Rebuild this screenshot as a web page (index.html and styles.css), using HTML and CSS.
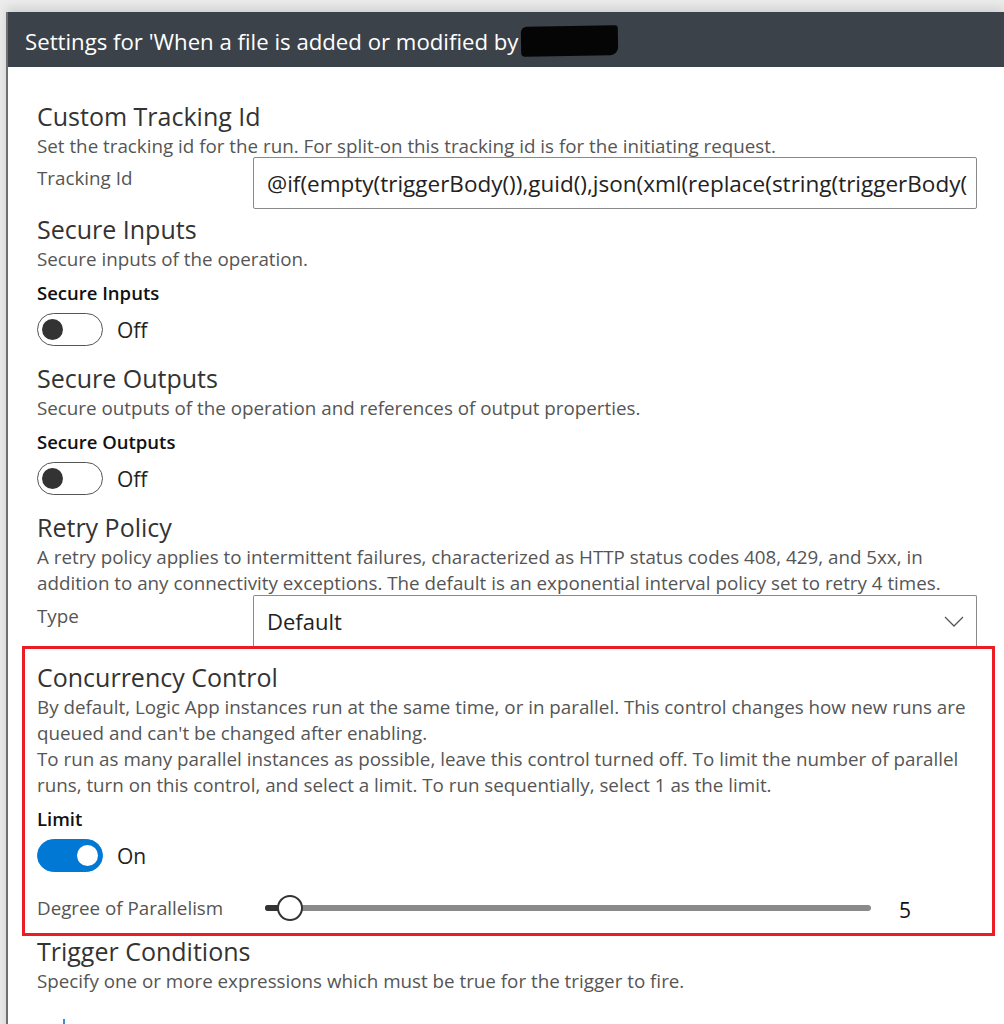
FILE: index.html
```html
<!DOCTYPE html>
<html lang="en">
<head>
  <meta charset="UTF-8" />
  <meta name="viewport" content="width=device-width, initial-scale=1.0" />
  <title>Trigger Settings</title>
  <link rel="stylesheet" href="styles.css">
</head>
<body>
  <div class="panel">
    <div class="panel-header">
      <span class="title">Settings for 'When a file is added or modified by</span><span class="redact"></span>
    </div>

    <div class="panel-body">
      <section class="setting">
        <h3>Custom Tracking Id</h3>
        <p class="desc">Set the tracking id for the run. For split-on this tracking id is for the initiating request.</p>
        <div class="field">
          <label class="field-label">Tracking Id</label>
          <div class="textbox"><span class="textbox-value">@if(empty(triggerBody()),guid(),json(xml(replace(string(triggerBody(</span></div>
        </div>
      </section>

      <section class="setting">
        <h3>Secure Inputs</h3>
        <p class="desc">Secure inputs of the operation.</p>
        <div class="switch-label">Secure Inputs</div>
        <div class="toggle">
          <span class="switch"><span class="knob"></span></span>
          <span class="toggle-text">Off</span>
        </div>
      </section>

      <section class="setting">
        <h3>Secure Outputs</h3>
        <p class="desc">Secure outputs of the operation and references of output properties.</p>
        <div class="switch-label">Secure Outputs</div>
        <div class="toggle">
          <span class="switch"><span class="knob"></span></span>
          <span class="toggle-text">Off</span>
        </div>
      </section>

      <section class="setting retry">
        <h3>Retry Policy</h3>
        <p class="desc">A retry policy applies to intermittent failures, characterized as HTTP status codes 408, 429, and 5xx, in addition to any connectivity exceptions. The default is an exponential interval policy set to retry 4 times.</p>
        <div class="field">
          <label class="field-label">Type</label>
          <div class="select">
            <span>Default</span>
            <svg class="chevron" width="20" height="11" viewBox="0 0 20 11"><polyline points="1,1 10,10 19,1" fill="none" stroke="#555" stroke-width="1.3"/></svg>
          </div>
        </div>
      </section>

      <section class="setting highlight">
        <h3>Concurrency Control</h3>
        <p class="desc">By default, Logic App instances run at the same time, or in parallel. This control changes how new runs are queued and can't be changed after enabling.<br>To run as many parallel instances as possible, leave this control turned off. To limit the number of parallel runs, turn on this control, and select a limit. To run sequentially, select 1 as the limit.</p>
        <div class="switch-label">Limit</div>
        <div class="toggle on">
          <span class="switch"><span class="knob"></span></span>
          <span class="toggle-text">On</span>
        </div>
        <div class="field slider-row">
          <label class="field-label">Degree of Parallelism</label>
          <div class="slider-wrap">
            <div class="slider">
              <div class="track"></div>
              <div class="fill" style="width: 25px"></div>
              <div class="thumb" style="left: 12px"></div>
            </div>
            <span class="slider-value">5</span>
          </div>
        </div>
      </section>

      <section class="setting">
        <h3>Trigger Conditions</h3>
        <p class="desc">Specify one or more expressions which must be true for the trigger to fire.</p>
        <div class="add-row"><span class="plus"></span></div>
      </section>
    </div>
  </div>
</body>
</html>
```

FILE: styles.css
```css
body {
  margin: 0;
  font-family: 'Open Sans', 'Noto Sans', sans-serif;
  background: #ececec;
  overflow: hidden;
}
.panel {
  margin: 12px 0 0 6px;
  border-left: 2px solid #6f6f6f;
  background: white;
  min-height: 1012px;
  box-shadow: 0 -4px 10px rgba(0,0,0,0.12);
}
.panel-header {
  height: 55px;
  box-sizing: border-box;
  padding: 3px 0 0 17px;
  background: #3b424a;
  color: white;
  display: flex;
  align-items: center;
  font-size: 22.2px;
}
.redact {
  display: inline-block;
  width: 97px;
  height: 30px;
  margin-left: 3px;
  background: #050505;
  border-radius: 6px 3px 8px 4px;
  transform: rotate(-1deg);
}
.panel-body {
  padding: 34px 27px 0 29px;
}
.setting h3 {
  margin: 0;
  font-size: 25px;
  font-weight: 400;
  line-height: 30px;
  color: #333;
}
.desc {
  margin: 2px 0 0;
  font-size: 18.8px;
  line-height: 26px;
  color: #555;
}
.field {
  display: grid;
  grid-template-columns: 216px 1fr;
}
.field-label {
  padding-top: 9px;
  font-size: 18.8px;
  line-height: 24px;
  color: #555;
}
.textbox, .select {
  height: 52px;
  box-sizing: border-box;
  border: 1px solid #8a8a8a;
  border-radius: 2px;
  padding: 0 12px 0 13px;
  display: flex;
  align-items: center;
  font-size: 22.5px;
  color: #222;
  white-space: nowrap;
  overflow: hidden;
}
.textbox {
  padding-right: 2px;
}
.textbox-value {
  overflow: hidden;
}
.setting:first-child .field {
  margin-top: -2px;
  margin-bottom: 5px;
}
.retry .field {
  margin-top: -1px;
}
.select {
  height: 51px;
  font-size: 22px;
  border-bottom: none;
  border-radius: 2px 2px 0 0;
  justify-content: space-between;
}
.switch-label {
  margin-top: 9px;
  font-size: 18.5px;
  line-height: 24px;
  font-weight: 600;
  color: #111;
}
.toggle {
  margin-top: 8px;
  display: flex;
  align-items: center;
  gap: 14px;
  margin-bottom: 17px;
}
.switch {
  width: 66px;
  height: 33px;
  box-sizing: border-box;
  border: 1px solid #555;
  border-radius: 17px;
  padding: 0 4px;
  display: flex;
  align-items: center;
}
.knob {
  width: 21px;
  height: 21px;
  border-radius: 50%;
  background: #333;
}
.toggle.on .switch {
  background: #0078d4;
  border-color: #0078d4;
  justify-content: flex-end;
}
.toggle.on .knob {
  background: white;
}
.toggle-text {
  font-size: 21px;
  color: #222;
}
.highlight {
  margin: 0 -18px 0 -15px;
  border: 3px solid #ec1c24;
  padding: 13px 15px 12px 12px;
}
.highlight .toggle {
  margin-bottom: 0;
}
.slider-row {
  margin-top: 23px;
  height: 26px;
  align-items: center;
}
.slider-row .field-label {
  padding-top: 0;
  line-height: 26px;
}
.slider-wrap {
  display: flex;
  align-items: center;
  height: 26px;
  padding-left: 12px;
}
.slider {
  position: relative;
  flex: 1;
  height: 26px;
}
.track {
  position: absolute;
  left: 0;
  right: 0;
  top: 10px;
  height: 6px;
  border-radius: 3px;
  background: #8a8a8a;
}
.fill {
  position: absolute;
  left: 0;
  top: 10px;
  height: 6px;
  border-radius: 3px;
  background: #333;
}
.thumb {
  position: absolute;
  top: 0;
  width: 26px;
  height: 26px;
  box-sizing: border-box;
  border: 2px solid #333;
  border-radius: 50%;
  background: white;
}
.slider-value {
  width: 78px;
  margin-left: 28px;
  padding-top: 3px;
  font-size: 21px;
  color: #111;
}
.add-row {
  height: 30px;
  padding-top: 25px;
  padding-left: 26px;
}
.plus {
  display: block;
  width: 2px;
  height: 14px;
  background: #3a8fd9;
}
```
